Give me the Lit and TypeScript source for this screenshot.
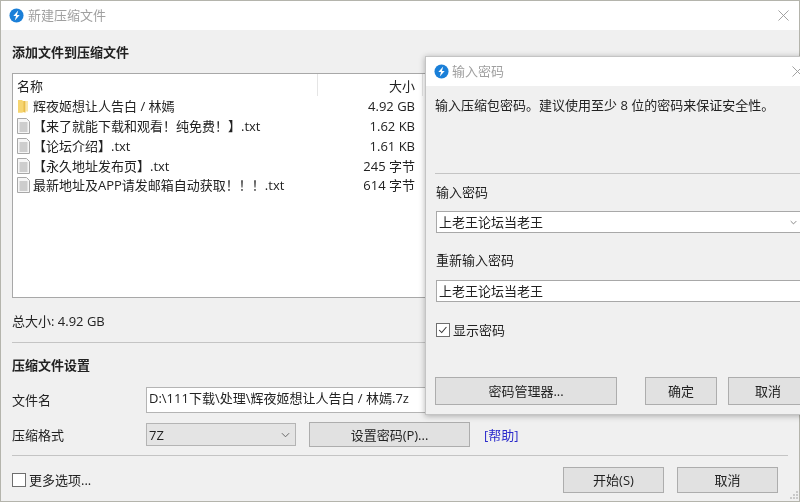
import { LitElement, html, css, svg } from "lit";
import { customElement } from "lit/decorators.js";

const logo = html`<svg class="logo" viewBox="0 0 16 16"><circle cx="8" cy="8" r="7.5" fill="#1a7fd8"/><path d="M9.8 2.6 4.6 8.6h2.9L6.2 13.4 11.4 7.4H8.5z" fill="#fff"/></svg>`;
const chevron = html`<svg class="chev" viewBox="0 0 10 6"><path d="M1 1l4 4 4-4" fill="none" stroke="#666" stroke-width="1.1"/></svg>`;
const closeX = html`<svg class="x" viewBox="0 0 12 12"><path d="M.5.5l11 11M11.5.5l-11 11" stroke="#999" stroke-width="1" fill="none"/></svg>`;
const folder = svg`<svg class="ficon" viewBox="0 0 13 16"><path d="M1 2h4l1 1h1v11l-2 .8H1z" fill="#f6d570"/><path d="M8.5 3H11v10.5H8.5z" fill="#fbe6a4"/><path d="M6.5 3h2v11.8l-2-.8z" fill="#e9bd4a"/></svg>`;
const doc = svg`<svg class="ficon" viewBox="0 0 13 16"><path d="M.5 .5h9l3 3v12h-12z" fill="#f6f6f6" stroke="#a8a8a8"/><path d="M2.5 5h8M2.5 7h8M2.5 9h8M2.5 11h8M2.5 13h8" stroke="#a4a4a4"/></svg>`;

const rows = [
  { icon: folder, name: "辉夜姬想让人告白 / 林嫣", size: "4.92 GB" },
  { icon: doc, name: "【来了就能下载和观看！纯免费！】.txt", size: "1.62 KB" },
  { icon: doc, name: "【论坛介绍】.txt", size: "1.61 KB" },
  { icon: doc, name: "【永久地址发布页】.txt", size: "245 字节" },
  { icon: doc, name: "最新地址及APP请发邮箱自动获取！！！.txt", size: "614 字节" },
];

@customElement("app-root")
export class AppRoot extends LitElement {
  static styles = css`
    :host {
      display: block;
      width: 800px;
      height: 502px;
      overflow: hidden;
      position: relative;
      background: #b4b4ac;
      font: 13px/18px "Open Sans", "Noto Sans CJK SC", sans-serif;
      color: #222;
      filter: blur(0.4px);
    }
    .win { position: absolute; background: #f0f0f0; display: flex; flex-direction: column; }
    .main { left: 1px; top: 1px; width: 798px; height: 500px; }
    .dialog {
      left: 425px; top: 56px; width: 400px; height: 359px;
      box-shadow: 0 1px 6px rgba(0,0,0,.3);
      border: 1px solid #c4c4c4; box-sizing: border-box;
    }
    .tbar { height: 29px; flex: none; background: #fff; display: flex; align-items: center; color: #a0a0a0; white-space: nowrap; }
    .tbar span { padding-bottom: 1px; }
    .main .tbar { padding: 0 10px 0 8px; gap: 4px; }
    .main .tbar .x { margin-left: auto; }
    .dialog .tbar { padding-left: 8px; gap: 3px; }
    .dialog .tbar .x { margin-left: 285px; }
    .logo { width: 15px; height: 15px; flex: none; }
    .x { width: 11px; height: 11px; flex: none; }
    .mbody { flex: 1; display: flex; flex-direction: column; padding: 0 11px; position: relative; }
    h2 { margin: 0; font: inherit; font-weight: 700; color: #222; }
    .h1 { margin-top: 13px; }
    .list {
      margin-top: 12px; height: 225px; box-sizing: border-box;
      background: #fff; border: 1px solid #a8a8a8; border-right: none;
      padding: 0 4px;
    }
    .lhead { display: flex; height: 22.1px; }
    .lhead .n { box-sizing: border-box; width: 301px; padding-top: 2px; border-right: 1px solid #e5e5e5; line-height: 20px; }
    .lhead .s { width: 97px; text-align: right; padding-top: 2px; line-height: 20px; }
    .lhead .t { width: 7px; border-right: 1px solid #e5e5e5; }
    .row { display: flex; height: 19.85px; align-items: center; }
    .row .n { width: 301px; display: flex; align-items: center; gap: 3px; white-space: nowrap; }
    .row .s { width: 97px; text-align: right; }
    .ficon { width: 13px; height: 16px; flex: none; }
    .total { margin-top: 14px; }
    .hr { height: 1px; background: #c4c4c4; flex: none; }
    .total + .hr { margin-top: 12px; }
    .h2 { margin-top: 13px; }
    .frow { display: flex; align-items: center; }
    .frow .lab { width: 134px; flex: none; }
    .f1 { margin-top: 13px; height: 26px; }
    .f2 { margin-top: 9px; height: 25px; }
    .input {
      box-sizing: border-box; background: #fff; border: 1px solid #b4b4b4;
      padding-left: 2px; display: flex; align-items: center; white-space: nowrap;
    }
    .f1 .input { width: 300px; height: 26px; padding-bottom: 5px; }
    .combo {
      box-sizing: border-box; width: 150px; height: 23px; background: #e4e4e4; border: 1px solid #b4b4b4;
      display: flex; align-items: center; justify-content: space-between; padding: 0 5px 0 2px;
    }
    .chev { width: 9px; height: 6px; flex: none; }
    .btn {
      box-sizing: border-box; background: #e1e1e1; border: 1px solid #adadad;
      display: flex; align-items: center; justify-content: center; flex: none;
    }
    .pwbtn { width: 161px; height: 25px; margin-left: 13px; }
    .help { color: #2a2acb; margin-left: 14px; }
    .f2 + .hr { margin-top: 8px; }
    .foot { display: flex; align-items: center; margin-top: 11px; height: 26px; }
    .box { box-sizing: border-box; width: 14px; height: 14px; background: #fff; border: 1px solid #6e6e6e; flex: none; display: block; }
    .foot .lab { margin-left: 3px; }
    .foot .b1 { margin-left: auto; width: 101px; height: 26px; }
    .foot .b2 { margin-left: 13px; margin-right: 10px; width: 101px; height: 26px; }
    .grip { position: absolute; right: 1px; bottom: 2px; width: 8px; height: 8px; }
    .dbody { flex: 1; display: flex; flex-direction: column; padding: 0 0 0 9px; }
    .msg { margin-top: 10px; white-space: nowrap; }
    .dbody .hr { margin-top: 59px; }
    .lbl { margin-left: 1px; }
    .l1 { margin-top: 9px; }
    .pw {
      box-sizing: border-box; margin-left: 1px; width: 380px; height: 22px; background: #fff; border: 1px solid #a8a8a8;
      padding: 0 18px 0 2px; display: flex; align-items: center; justify-content: space-between;
    }
    .pw .chev { width: 7px; height: 5px; }
    .p1 { margin-top: 10px; }
    .l2 { margin-top: 18px; }
    .p2 { margin-top: 11px; }
    .chk { display: flex; align-items: center; gap: 3px; margin: 19px 0 0 1px; }
    .dbtns { display: flex; margin-top: 38px; }
    .dbtns .btn { height: 28px; }
    .d1 { width: 182px; }
    .d2 { width: 72px; margin-left: 28px; }
    .d3 { width: 80px; margin-left: 11px; }
  `;

  render() {
    return html`
      <section class="win main">
        <div class="tbar">${logo}<span>新建压缩文件</span>${closeX}</div>
        <div class="mbody">
          <h2 class="h1">添加文件到压缩文件</h2>
          <div class="list">
            <div class="lhead"><div class="n">名称</div><div class="s">大小</div><div class="t"></div></div>
            ${rows.map((r) => html`<div class="row"><div class="n">${r.icon}<span>${r.name}</span></div><div class="s">${r.size}</div></div>`)}
          </div>
          <div class="total">总大小: 4.92 GB</div>
          <div class="hr"></div>
          <h2 class="h2">压缩文件设置</h2>
          <div class="frow f1"><span class="lab">文件名</span><div class="input">D:\\111下载\\处理\\辉夜姬想让人告白 / 林嫣.7z</div></div>
          <div class="frow f2"><span class="lab">压缩格式</span><div class="combo">7Z${chevron}</div><div class="btn pwbtn">设置密码(P)...</div><span class="help">[帮助]</span></div>
          <div class="hr"></div>
          <div class="foot"><span class="box"></span><span class="lab">更多选项...</span><div class="btn b1">开始(S)</div><div class="btn b2">取消</div></div>
          <svg class="grip" viewBox="0 0 8 8"><path d="M6 0h2v2H6zM3 3h2v2H3zM6 3h2v2H6zM0 6h2v2H0zM3 6h2v2H3zM6 6h2v2H6z" fill="#c9c9c9"/></svg>
        </div>
      </section>
      <section class="win dialog">
        <div class="tbar">${logo}<span>输入密码</span>${closeX}</div>
        <div class="dbody">
          <div class="msg">输入压缩包密码。建议使用至少 8 位的密码来保证安全性。</div>
          <div class="hr"></div>
          <div class="lbl l1">输入密码</div>
          <div class="pw p1">上老王论坛当老王${chevron}</div>
          <div class="lbl l2">重新输入密码</div>
          <div class="pw p2">上老王论坛当老王</div>
          <div class="chk"><svg class="box" viewBox="0 0 14 14"><path d="M2.5 7l3 3 5.5-6.5" fill="none" stroke="#333" stroke-width="1.2"/></svg><span>显示密码</span></div>
          <div class="dbtns"><div class="btn d1">密码管理器...</div><div class="btn d2">确定</div><div class="btn d3">取消</div></div>
        </div>
      </section>
    `;
  }
}
